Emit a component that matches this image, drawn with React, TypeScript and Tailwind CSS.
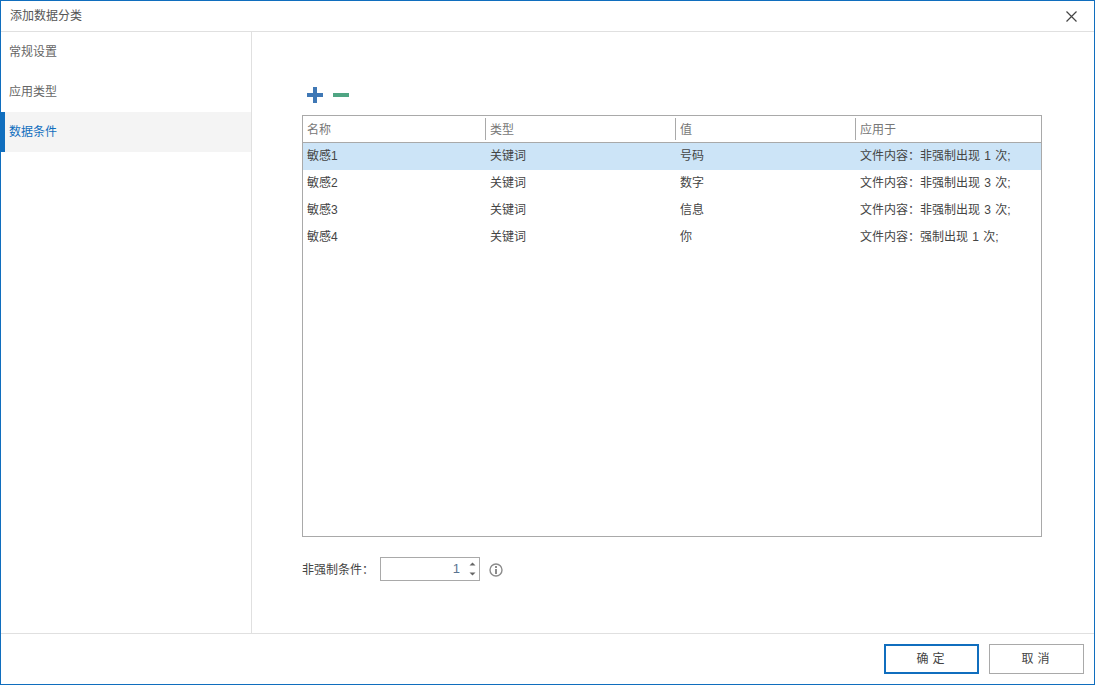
import React from "react";

const font = { fontFamily: '"Liberation Sans", "Noto Sans CJK SC", sans-serif' };

const navItems = ["常规设置", "应用类型", "数据条件"];

const rows = [
  { name: "敏感1", type: "关键词", value: "号码", apply: "文件内容：非强制出现 1 次;" },
  { name: "敏感2", type: "关键词", value: "数字", apply: "文件内容：非强制出现 3 次;" },
  { name: "敏感3", type: "关键词", value: "信息", apply: "文件内容：非强制出现 3 次;" },
  { name: "敏感4", type: "关键词", value: "你", apply: "文件内容：强制出现 1 次;" },
];

function HeaderCell({ label, width, divider }: { label: string; width: string; divider?: boolean }) {
  return (
    <div className={`${width} flex h-full items-center`}>
      {divider && <div className="h-[22px] w-px bg-[#a9a9a9]" />}
      <span className="pl-1 pt-[2px]">{label}</span>
    </div>
  );
}

export default function App() {
  return (
    <div
      className="flex h-[685px] w-[1095px] flex-col border border-[#106ebe] bg-white text-xs text-[#444444]"
      style={font}
    >
      {/* 标题栏 */}
      <div className="flex h-[31px] shrink-0 items-center justify-between border-b border-[#e0e0e0] pl-[9px] pr-[16px]">
        <span className="text-[#555555]">添加数据分类</span>
        <svg width="11" height="11" viewBox="0 0 11 11" className="mr-[1px]">
          <path d="M0.5 0.5 L10.5 10.5 M10.5 0.5 L0.5 10.5" stroke="#444444" strokeWidth="1.2" fill="none" />
        </svg>
      </div>

      <div className="flex min-h-0 flex-1">
        {/* 侧边导航 */}
        <div className="w-[251px] shrink-0 border-r border-[#e0e0e0]">
          {navItems.map((item, i) => (
            <div
              key={item}
              className={
                i === 2
                  ? "flex h-10 items-center border-l-4 border-[#106ebe] bg-[#f4f4f4] pl-1 text-[#106ebe]"
                  : "flex h-10 items-center pl-2 text-[#666666]"
              }
            >
              {item}
            </div>
          ))}
        </div>

        {/* 内容区 */}
        <div className="flex-1 pl-[50px] pt-[55px]">
          <div className="flex items-center gap-[10px] pl-[5px]">
            <svg width="16" height="16" viewBox="0 0 16 16">
              <path d="M6 0 H10 V6 H16 V10 H10 V16 H6 V10 H0 V6 H6 Z" fill="#3f78b5" />
            </svg>
            <svg width="16" height="16" viewBox="0 0 16 16">
              <rect x="0" y="6" width="16" height="4" fill="#4fa583" />
            </svg>
          </div>

          <div className="mt-[12px] h-[422px] w-[740px] border border-[#a9a9a9]">
            <div className="flex h-[27px] items-center border-b border-[#a9a9a9] text-[#777777]">
              <HeaderCell label="名称" width="w-[182px]" />
              <HeaderCell label="类型" width="w-[190px]" divider />
              <HeaderCell label="值" width="w-[180px]" divider />
              <HeaderCell label="应用于" width="flex-1" divider />
            </div>
            {rows.map((row, i) => (
              <div key={row.name} className={`flex h-[27px] items-center pb-[2px] ${i === 0 ? "bg-[#cce4f7]" : ""}`}>
                <div className="w-[183px] pl-1">{row.name}</div>
                <div className="w-[190px] pl-1">{row.type}</div>
                <div className="w-[180px] pl-1">{row.value}</div>
                <div className="flex-1 pl-1 [word-spacing:1px]">{row.apply}</div>
              </div>
            ))}
          </div>

          <div className="mt-[20px] flex items-center">
            <span className="w-[78px] pt-[2px]">非强制条件：</span>
            <div className="flex h-6 w-[100px] items-center justify-end border border-[#a9a9a9]">
              <span className="mr-[9px] text-[13px] text-[#5a7390]">1</span>
              <div className="mr-[3px] flex flex-col gap-[6px]">
                <svg width="7" height="4" viewBox="0 0 7 4">
                  <path d="M3.5 0.5 L6.5 3.5 H0.5 Z" fill="#666666" />
                </svg>
                <svg width="7" height="4" viewBox="0 0 7 4">
                  <path d="M0.5 0.5 H6.5 L3.5 3.5 Z" fill="#666666" />
                </svg>
              </div>
            </div>
            <svg width="14" height="14" viewBox="0 0 14 14" className="ml-[9px] mt-[2px]">
              <circle cx="7" cy="7" r="6" stroke="#8c8c8c" strokeWidth="1.4" fill="none" />
              <rect x="6" y="3" width="2" height="2" fill="#8c8c8c" />
              <rect x="6" y="6" width="2" height="5" fill="#8c8c8c" />
            </svg>
          </div>
        </div>
      </div>

      {/* 底部按钮 */}
      <div className="flex h-[51px] shrink-0 items-start justify-end gap-[10px] border-t border-[#e0e0e0] pr-[10px] pt-[10px]">
        <button className="h-[30px] w-[95px] border-2 border-[#106ebe] bg-white pl-[2px] text-xs tracking-[4px] text-[#444444]">
          确定
        </button>
        <button className="h-[30px] w-[95px] border border-[#a9a9a9] bg-white pl-[2px] text-xs tracking-[4px] text-[#444444]">
          取消
        </button>
      </div>
    </div>
  );
}
